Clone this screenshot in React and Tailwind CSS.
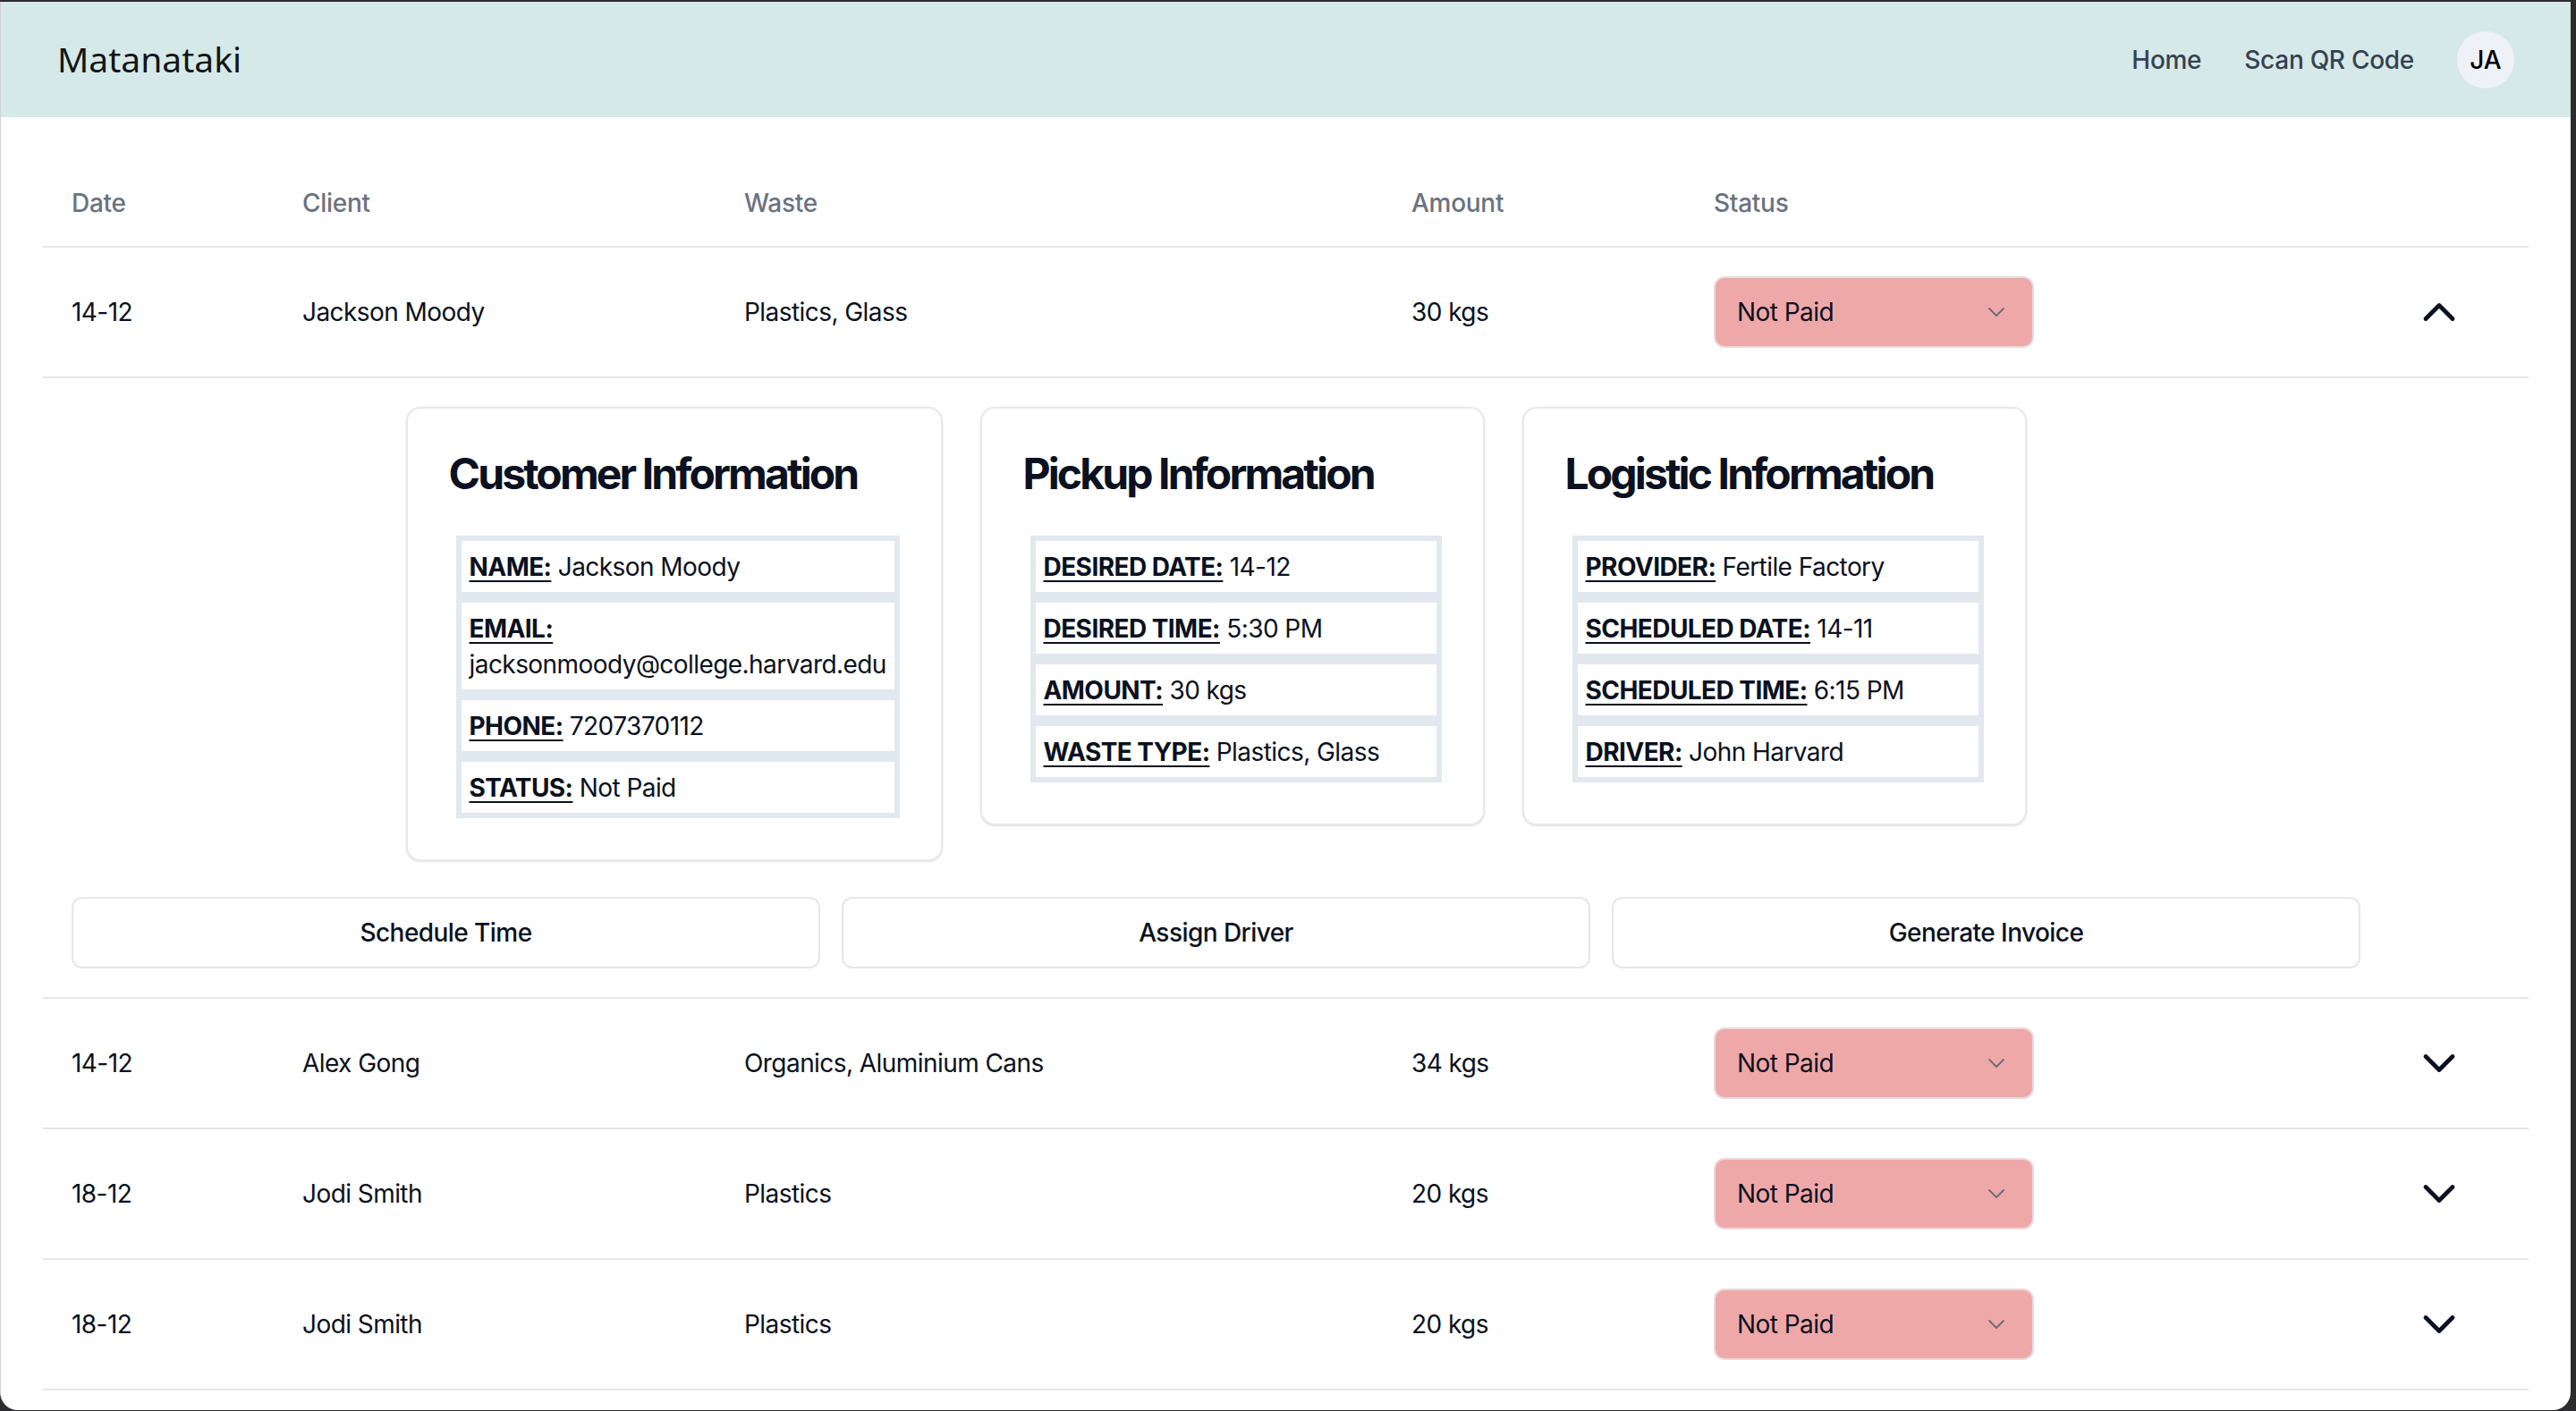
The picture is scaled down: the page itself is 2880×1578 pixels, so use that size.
import React from 'react';

const rows = [
    { date: '14-12', client: 'Jackson Moody', waste: 'Plastics, Glass', amount: '30 kgs', open: true },
    { date: '14-12', client: 'Alex Gong', waste: 'Organics, Aluminium Cans', amount: '34 kgs' },
    { date: '18-12', client: 'Jodi Smith', waste: 'Plastics', amount: '20 kgs' },
    { date: '18-12', client: 'Jodi Smith', waste: 'Plastics', amount: '20 kgs' },
];

const cards = [
    {
        title: 'Customer Information',
        width: 'w-[600px]',
        items: [
            ['NAME:', 'Jackson Moody'],
            ['EMAIL:', 'jacksonmoody@college.harvard.edu'],
            ['PHONE:', '7207370112'],
            ['STATUS:', 'Not Paid'],
        ],
    },
    {
        title: 'Pickup Information',
        width: 'w-[564px]',
        items: [
            ['DESIRED DATE:', '14-12'],
            ['DESIRED TIME:', '5:30 PM'],
            ['AMOUNT:', '30 kgs'],
            ['WASTE TYPE:', 'Plastics, Glass'],
        ],
    },
    {
        title: 'Logistic Information',
        width: 'w-[564px]',
        items: [
            ['PROVIDER:', 'Fertile Factory'],
            ['SCHEDULED DATE:', '14-11'],
            ['SCHEDULED TIME:', '6:15 PM'],
            ['DRIVER:', 'John Harvard'],
        ],
    },
];

const cols = 'grid grid-cols-[258px_494px_746px_338px_1fr_156px] items-center';

function Chevron({ up }) {
    return (
        <svg width="48" height="48" viewBox="0 0 24 24" fill="none" stroke="#0b1120" strokeWidth="2.4" strokeLinecap="round" strokeLinejoin="round">
            {up ? <path d="m4.5 15.75 7.5-7.5 7.5 7.5" /> : <path d="m19.5 8.25-7.5 7.5-7.5-7.5" />}
        </svg>
    );
}

function StatusSelect() {
    return (
        <div className="w-[358px] h-[80px] flex items-center justify-between pl-[24px] pr-[30px] bg-[#efa8a8] border-2 border-[#ead9dc] rounded-[12px]">
            <span className="text-[28px] tracking-[-0.02em] text-[#0b1120]">Not Paid</span>
            <svg width="20" height="12" viewBox="0 0 20 12" fill="none" stroke="#6b6b73" strokeWidth="1.8" strokeLinecap="round" strokeLinejoin="round">
                <path d="M2 2l8 8 8-8" />
            </svg>
        </div>
    );
}

function InfoCard({ card }) {
    return (
        <div className={`${card.width} border-2 border-[#e6e8ec] rounded-[16px] p-[46px] shadow-sm bg-white`}>
            <h2 className="text-[48px] leading-[54px] font-bold tracking-[-0.06em] text-[#0b1120]">{card.title}</h2>
            <div className="mt-[42px] ml-[8px] bg-[#e2e8f0] p-[6px] flex flex-col gap-[12px]">
                {card.items.map(([label, value]) => (
                    <div key={label} className="bg-white px-[9px] py-[8.5px] text-[28px] leading-[40px] tracking-[-0.02em] text-[#0b1120]">
                        <span className="font-bold underline underline-offset-[5px] decoration-2">{label}</span> {value}
                    </div>
                ))}
            </div>
        </div>
    );
}

function Expanded() {
    return (
        <div className="border-b-2 border-[#e5e7eb] pt-[32px] pb-[32px] pr-[156px]">
            <div className="px-[32px]">
                <div className="flex justify-center items-start gap-[42px]">
                    {cards.map((c) => (
                        <InfoCard key={c.title} card={c} />
                    ))}
                </div>
                <div className="grid grid-cols-3 gap-[24px] mt-[40px]">
                    {['Schedule Time', 'Assign Driver', 'Generate Invoice'].map((b) => (
                        <button key={b} className="h-[80px] border-2 border-[#e5e7eb] rounded-[12px] bg-white text-[28px] tracking-[-0.02em] font-medium text-[#0b1120]">
                            {b}
                        </button>
                    ))}
                </div>
            </div>
        </div>
    );
}

export default function App() {
    return (
        <div className="h-screen bg-[#2c2c2e] pt-[2px] pr-[6px] pb-[1px] font-['Inter',sans-serif]">
            <div className="h-full bg-white rounded-b-[20px] overflow-hidden border-l border-[#cfd3d6]">
                {/* Navbar */}
                <header className="h-[129px] bg-[#d5e9e8] flex items-center justify-between pl-[63px] pr-[63px]">
                    <span className="font-['Noto_Sans',sans-serif] text-[39px] text-[#141414]">Matanataki</span>
                    <nav className="flex items-center gap-[48px]">
                        <a className="text-[28px] font-medium tracking-[-0.01em] text-[#374151]">Home</a>
                        <a className="text-[28px] font-medium tracking-[-0.01em] text-[#374151]">Scan QR Code</a>
                        <div className="w-[64px] h-[64px] rounded-full bg-[#eef2f7] flex items-center justify-center text-[28px] font-medium text-black">
                            JA
                        </div>
                    </nav>
                </header>

                {/* Table */}
                <main className="px-[47px] pt-[48px]">
                    <div className={`${cols} border-b-2 border-[#e5e7eb] py-[28px] text-[28px] leading-[40px] tracking-[-0.01em] font-medium text-[#6b7280]`}>
                        <div className="px-[32px]">Date</div>
                        <div className="px-[32px]">Client</div>
                        <div className="px-[32px]">Waste</div>
                        <div className="px-[32px]">Amount</div>
                        <div className="px-[32px]">Status</div>
                        <div />
                    </div>
                    {rows.map((r, i) => (
                        <React.Fragment key={i}>
                            <div className={`${cols} border-b-2 border-[#e5e7eb] py-[32px] text-[28px] leading-[40px] tracking-[-0.02em] text-[#0b1120]`}>
                                <div className="px-[32px]">{r.date}</div>
                                <div className="px-[32px]">{r.client}</div>
                                <div className="px-[32px]">{r.waste}</div>
                                <div className="px-[32px]">{r.amount}</div>
                                <div className="px-[32px]">
                                    <StatusSelect />
                                </div>
                                <div className="pl-[32px] flex">
                                    <Chevron up={r.open} />
                                </div>
                            </div>
                            {r.open && <Expanded />}
                        </React.Fragment>
                    ))}
                </main>
            </div>
        </div>
    );
}
